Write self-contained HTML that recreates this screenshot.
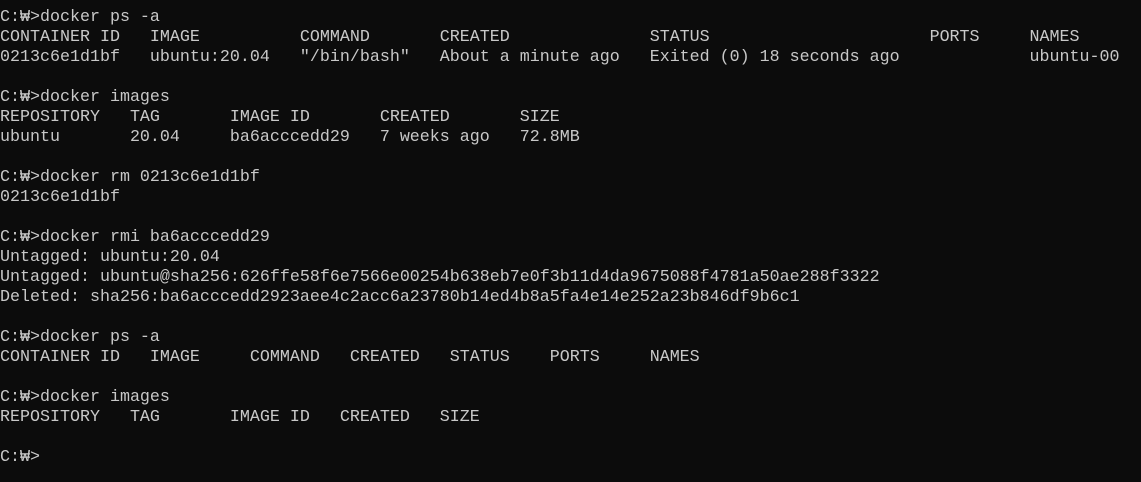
<!DOCTYPE html>
<html><head><style>
html,body{margin:0;padding:0;background:#0c0c0c;width:1141px;height:482px;overflow:hidden}
pre{margin:0;padding:8px 0 0 0;font-family:"Liberation Mono","DejaVu Sans Mono",monospace;font-size:16.67px;line-height:20px;color:#c8c8c8;letter-spacing:0}
</style></head><body><pre>C:₩&gt;docker ps -a
CONTAINER ID   IMAGE          COMMAND       CREATED              STATUS                      PORTS     NAMES
0213c6e1d1bf   ubuntu:20.04   "/bin/bash"   About a minute ago   Exited (0) 18 seconds ago             ubuntu-00

C:₩&gt;docker images
REPOSITORY   TAG       IMAGE ID       CREATED       SIZE
ubuntu       20.04     ba6acccedd29   7 weeks ago   72.8MB

C:₩&gt;docker rm 0213c6e1d1bf
0213c6e1d1bf

C:₩&gt;docker rmi ba6acccedd29
Untagged: ubuntu:20.04
Untagged: ubuntu@sha256:626ffe58f6e7566e00254b638eb7e0f3b11d4da9675088f4781a50ae288f3322
Deleted: sha256:ba6acccedd2923aee4c2acc6a23780b14ed4b8a5fa4e14e252a23b846df9b6c1

C:₩&gt;docker ps -a
CONTAINER ID   IMAGE     COMMAND   CREATED   STATUS    PORTS     NAMES

C:₩&gt;docker images
REPOSITORY   TAG       IMAGE ID   CREATED   SIZE

C:₩&gt;</pre></body></html>
